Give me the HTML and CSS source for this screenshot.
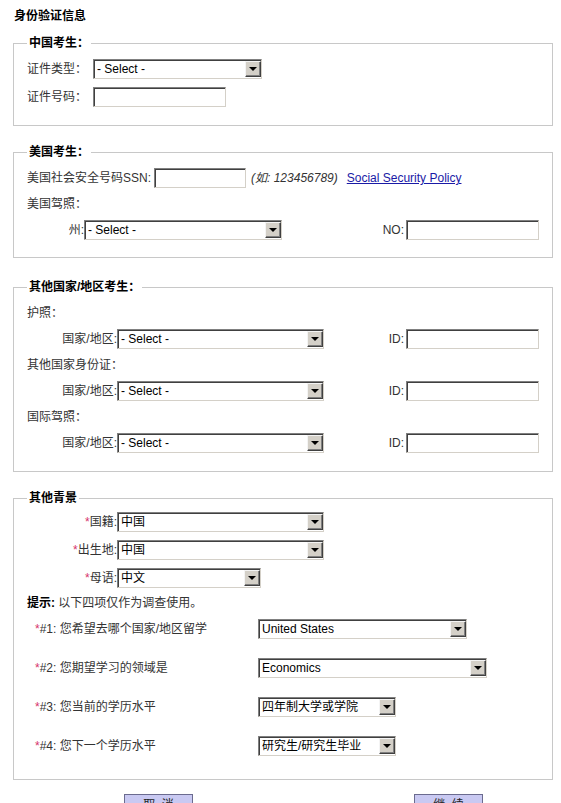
FILE: index.html
```html
<!doctype html>
<html lang="zh-CN">
<head>
    <meta charset="UTF-8">
    <title>身份验证信息</title>
    <link rel="stylesheet" href="styles.css">
</head>
<body>
<h3 class="page-title">身份验证信息</h3>

<fieldset class="box box-cn">
    <legend>中国考生：</legend>
    <div class="row">
        <label class="lbl">证件类型：</label>
        <span class="sel w169"><select><option>- Select -</option></select><i class="arr"></i></span>
    </div>
    <div class="row">
        <label class="lbl">证件号码：</label>
        <input class="txt w133" type="text">
    </div>
</fieldset>

<fieldset class="box box-us">
    <legend>美国考生：</legend>
    <div class="row">
        <label class="lbl-ssn">美国社会安全号码SSN:</label>
        <input class="txt w92" type="text">
        <span class="hint">(如: 123456789)</span>
        <a class="policy" href="#">Social Security Policy</a>
    </div>
    <div class="row-text">美国驾照：</div>
    <div class="row">
        <label class="lbl-r w57">州:</label>
        <span class="sel w198"><select><option>- Select -</option></select><i class="arr"></i></span>
        <span class="right"><label>NO:</label><input class="txt w133" type="text"></span>
    </div>
</fieldset>

<fieldset class="box box-other">
    <legend>其他国家/地区考生：</legend>
    <div class="row-text">护照：</div>
    <div class="row">
        <label class="lbl-r w90">国家/地区:</label>
        <span class="sel w207"><select><option>- Select -</option></select><i class="arr"></i></span>
        <span class="right"><label>ID:</label><input class="txt w133" type="text"></span>
    </div>
    <div class="row-text">其他国家身份证：</div>
    <div class="row">
        <label class="lbl-r w90">国家/地区:</label>
        <span class="sel w207"><select><option>- Select -</option></select><i class="arr"></i></span>
        <span class="right"><label>ID:</label><input class="txt w133" type="text"></span>
    </div>
    <div class="row-text">国际驾照：</div>
    <div class="row">
        <label class="lbl-r w90">国家/地区:</label>
        <span class="sel w207"><select><option>- Select -</option></select><i class="arr"></i></span>
        <span class="right"><label>ID:</label><input class="txt w133" type="text"></span>
    </div>
</fieldset>

<fieldset class="box box-bg">
    <legend>其他青景</legend>
    <div class="row">
        <label class="lbl-r w90"><em>*</em>国籍:</label>
        <span class="sel w207"><select><option>中国</option></select><i class="arr"></i></span>
    </div>
    <div class="row">
        <label class="lbl-r w90"><em>*</em>出生地:</label>
        <span class="sel w207"><select><option>中国</option></select><i class="arr"></i></span>
    </div>
    <div class="row">
        <label class="lbl-r w90"><em>*</em>母语:</label>
        <span class="sel w144"><select><option>中文</option></select><i class="arr"></i></span>
    </div>
    <div class="tip"><b>提示:</b> 以下四项仅作为调查使用。</div>
    <div class="survey">
        <div class="row">
            <label class="q"><em>*</em>#1: 您希望去哪个国家/地区留学</label>
            <span class="sel w209"><select><option>United States</option></select><i class="arr"></i></span>
        </div>
        <div class="row">
            <label class="q"><em>*</em>#2: 您期望学习的领域是</label>
            <span class="sel w229"><select><option>Economics</option></select><i class="arr"></i></span>
        </div>
        <div class="row">
            <label class="q"><em>*</em>#3: 您当前的学历水平</label>
            <span class="sel w138"><select><option>四年制大学或学院</option></select><i class="arr"></i></span>
        </div>
        <div class="row">
            <label class="q"><em>*</em>#4: 您下一个学历水平</label>
            <span class="sel w138"><select><option>研究生/研究生毕业</option></select><i class="arr"></i></span>
        </div>
    </div>
</fieldset>

<div class="actions">
    <button class="btn" type="button">取&nbsp;&nbsp;消</button>
    <button class="btn" type="button">继&nbsp;&nbsp;续</button>
</div>
</body>
</html>
```

FILE: styles.css
```css
html, body {
    background: #fff;
}

body {
    margin: 0;
    padding: 8px 9px 0 13px;
    font: 12px/16px "Liberation Sans", "Noto Sans CJK SC", sans-serif;
    color: #333;
}

.page-title {
    margin: 0 0 0 1px;
    font-size: 12px;
    line-height: 16px;
    font-weight: bold;
    color: #000;
}

/* fieldsets */
.box {
    width: 540px;
    box-sizing: border-box;
    margin: 18px 0 0 0;
    padding: 8px 13px 17px 13px;
    border: 1px solid #c8c8c8;
    min-width: 0;
}

.box-cn {
    margin-top: 11px;
    padding-bottom: 18px;
}

.box-other {
    margin-top: 21px;
    padding-top: 10px;
    padding-bottom: 18px;
}

.box-bg {
    padding-top: 6px;
    padding-bottom: 23px;
}

.box legend {
    padding: 0 2px;
    font-weight: bold;
    color: #000;
    line-height: 16px;
}

.row {
    display: flex;
    align-items: center;
    height: 20px;
    margin-top: 8px;
}

.box > legend + .row {
    margin-top: 0;
}

.row-text {
    height: 16px;
    margin-top: 8px;
}

.box > legend + .row-text {
    margin-top: 0;
}

.lbl {
    width: 66px;
    flex: none;
}

.lbl-ssn {
    flex: none;
    margin-right: 3px;
}

.lbl-r {
    flex: none;
    text-align: right;
}

.w57 { width: 57px; }
.w90 { width: 90px; }

em {
    font-style: normal;
    color: #d6336c;
}

.right {
    margin-left: auto;
    display: flex;
    align-items: center;
}

.right label {
    margin-right: 2px;
}

/* inputs */
.txt {
    box-sizing: border-box;
    height: 20px;
    margin: 0;
    padding: 0 2px;
    border: 1px solid;
    border-color: #808080 #d4d0c8 #d4d0c8 #808080;
    box-shadow: inset 1px 1px 0 #404040;
    background: #fff;
    font: inherit;
    outline: none;
}

.w92 { width: 92px; }
.w133 { width: 133px; }

/* classic select look */
.sel {
    position: relative;
    display: inline-block;
    height: 20px;
    flex: none;
}

.sel select {
    -webkit-appearance: none;
    appearance: none;
    box-sizing: border-box;
    width: 100%;
    height: 20px;
    margin: 0;
    padding: 0 20px 0 3px;
    border: 1px solid;
    border-color: #808080 #d4d0c8 #d4d0c8 #808080;
    box-shadow: inset 1px 1px 0 #404040;
    border-radius: 0;
    background: #fff;
    color: #000;
    font: 12px/16px "Liberation Sans", "Noto Sans CJK SC", sans-serif;
    outline: none;
}

.sel .arr {
    position: absolute;
    top: 2px;
    right: 1px;
    width: 16px;
    height: 16px;
    box-sizing: border-box;
    background: #d4d0c8;
    border: 1px solid;
    border-color: #f4f4f4 #404040 #404040 #f4f4f4;
    box-shadow: inset -1px -1px 0 #808080;
}

.sel .arr::after {
    content: "";
    position: absolute;
    left: 3px;
    top: 5px;
    border-left: 4px solid transparent;
    border-right: 4px solid transparent;
    border-top: 4px solid #000;
}

.w138 { width: 138px; }
.w144 { width: 144px; }
.w169 { width: 169px; }
.w198 { width: 198px; }
.w207 { width: 207px; }
.w209 { width: 209px; }
.w229 { width: 229px; }

.hint {
    margin-left: 5px;
    font-style: italic;
    color: #333;
}

.policy {
    margin-left: 9px;
    color: #1a1aa6;
    text-decoration: underline;
}

.tip {
    margin-top: 7px;
    height: 16px;
}

.tip b {
    color: #000;
}

.survey .row {
    margin-top: 19px;
}

.survey .row:first-child {
    margin-top: 8px;
}

.survey .q {
    width: 223px;
    padding-left: 8px;
    flex: none;
}

/* buttons */
.actions {
    display: flex;
    gap: 221px;
    padding: 14px 0 0 111px;
}

.btn {
    width: 69px;
    height: 21px;
    margin: 0;
    padding: 0;
    border: 1px solid #6b6b8f;
    background: #c9c9f2;
    color: #222;
    font: 12px/16px "Liberation Sans", "Noto Sans CJK SC", sans-serif;
}
```
